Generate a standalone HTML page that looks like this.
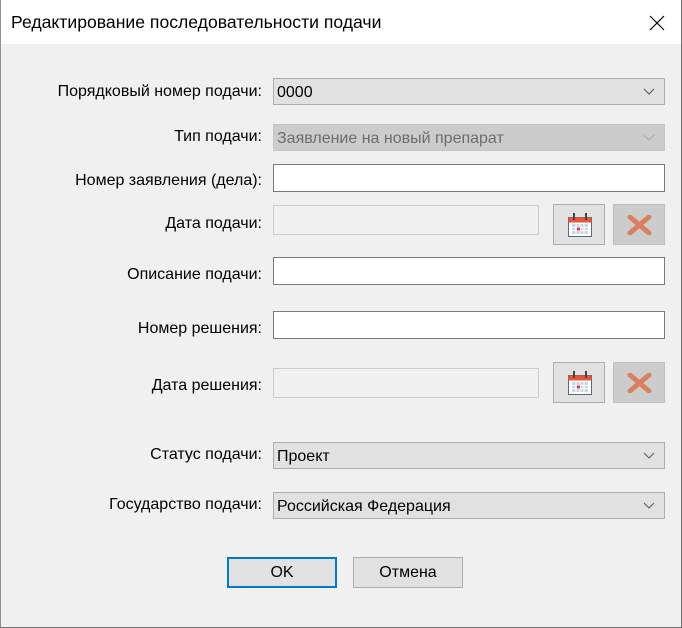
<!DOCTYPE html>
<html><head><meta charset="utf-8"><style>
*{margin:0;padding:0;box-sizing:border-box}
body{width:682px;height:628px;background:#f0f0f0;font-family:"Liberation Sans",sans-serif;position:relative;overflow:hidden}
.tb{position:absolute;left:0;top:0;width:682px;height:44px;background:#fff;font-size:17.6px;color:#000}
.tb span{position:absolute;left:11px;top:12px}
.frame{position:absolute;left:0;top:0;width:682px;height:628px;border-right:1px solid #707070;border-bottom:1px solid #707070;border-left:1px solid #909090;pointer-events:none}
.lbl{position:absolute;right:420px;font-size:16px;color:#000;white-space:nowrap}
.cb{position:absolute;left:273px;width:392px;height:27px;background:#e1e1e1;border:1px solid #adadad;font-size:16px;padding:5px 3px;color:#000}
.cb.dis{background:#cccccc;border-color:#c4c4c4;color:#6d6d6d}
.cb svg{position:absolute;right:9px;top:9px}
.in{position:absolute;left:273px;width:392px;height:28px;background:#fff;border:1px solid #7a7a7a}
.din{position:absolute;left:273px;width:266px;height:30px;background:#f0f0f0;border:1px solid #cccccc}
.btn{position:absolute;width:52px;height:41px;background:#e1e1e1;border:1px solid #adadad}
.btn.x{background:#cccccc;border-color:#bfbfbf}
.pb{position:absolute;top:557px;width:110px;height:31px;background:#e1e1e1;border:1px solid #adadad;font-size:16px;text-align:center;line-height:29px}
.pb.ok{border:2px solid #0078d7;line-height:27px}
</style></head><body>
<div class="tb"><span>Редактирование последовательности подачи</span>
<svg style="position:absolute;left:649px;top:15px" width="16" height="16"><path d="M1 1L15 15M15 1L1 15" stroke="#000" stroke-width="1.2"/></svg></div>

<div class="lbl" style="top:83px">Порядковый номер подачи:</div>
<div class="cb" style="top:78px">0000<svg width="12" height="8"><path d="M1 1L6 6L11 1" stroke="#555" fill="none"/></svg></div>

<div class="lbl" style="top:128px">Тип подачи:</div>
<div class="cb dis" style="top:124px">Заявление на новый препарат<svg width="12" height="8"><path d="M1 1L6 6L11 1" stroke="#aaa" fill="none"/></svg></div>

<div class="lbl" style="top:172px">Номер заявления (дела):</div>
<div class="in" style="top:164px"></div>

<div class="lbl" style="top:215px">Дата подачи:</div>
<div class="din" style="top:205px"></div>
<div class="btn" style="left:553px;top:204px"><svg style="position:absolute;left:13px;top:7px" width="26" height="26" viewBox="0 0 26 26"><rect x="1.5" y="5.5" width="23" height="19" fill="#fff" stroke="#5a6a7a"/><rect x="1.5" y="5.5" width="23" height="5" fill="#e8563a"/><rect x="5" y="12" width="16" height="10" fill="#c9d6e4"/><path d="M5 15.5h16M5 18.5h16M9 12v10M13 12v10M17 12v10" stroke="#fff"/><rect x="10" y="15.5" width="3" height="3" fill="#e34"/><rect x="6" y="1" width="2" height="7" fill="#444"/><rect x="18" y="1" width="2" height="7" fill="#444"/></svg></div>
<div class="btn x" style="left:613px;top:204px"><svg style="position:absolute;left:13px;top:10px" width="25" height="20"><path d="M3 2L22 18M22 2L3 18" stroke="#d88060" stroke-width="5" stroke-linecap="round"/></svg></div>

<div class="lbl" style="top:266px">Описание подачи:</div>
<div class="in" style="top:257px"></div>

<div class="lbl" style="top:320px">Номер решения:</div>
<div class="in" style="top:311px"></div>

<div class="lbl" style="top:377px">Дата решения:</div>
<div class="din" style="top:368px"></div>
<div class="btn" style="left:553px;top:362px"><svg style="position:absolute;left:13px;top:7px" width="26" height="26" viewBox="0 0 26 26"><rect x="1.5" y="5.5" width="23" height="19" fill="#fff" stroke="#5a6a7a"/><rect x="1.5" y="5.5" width="23" height="5" fill="#e8563a"/><rect x="5" y="12" width="16" height="10" fill="#c9d6e4"/><path d="M5 15.5h16M5 18.5h16M9 12v10M13 12v10M17 12v10" stroke="#fff"/><rect x="10" y="15.5" width="3" height="3" fill="#e34"/><rect x="6" y="1" width="2" height="7" fill="#444"/><rect x="18" y="1" width="2" height="7" fill="#444"/></svg></div>
<div class="btn x" style="left:613px;top:362px"><svg style="position:absolute;left:13px;top:10px" width="25" height="20"><path d="M3 2L22 18M22 2L3 18" stroke="#d88060" stroke-width="5" stroke-linecap="round"/></svg></div>

<div class="lbl" style="top:446px">Статус подачи:</div>
<div class="cb" style="top:442px">Проект<svg width="12" height="8"><path d="M1 1L6 6L11 1" stroke="#555" fill="none"/></svg></div>

<div class="lbl" style="top:496px">Государство подачи:</div>
<div class="cb" style="top:492px">Российская Федерация<svg width="12" height="8"><path d="M1 1L6 6L11 1" stroke="#555" fill="none"/></svg></div>

<div class="pb ok" style="left:227px">OK</div>
<div class="pb" style="left:353px">Отмена</div>
<div class="frame"></div>
</body></html>
